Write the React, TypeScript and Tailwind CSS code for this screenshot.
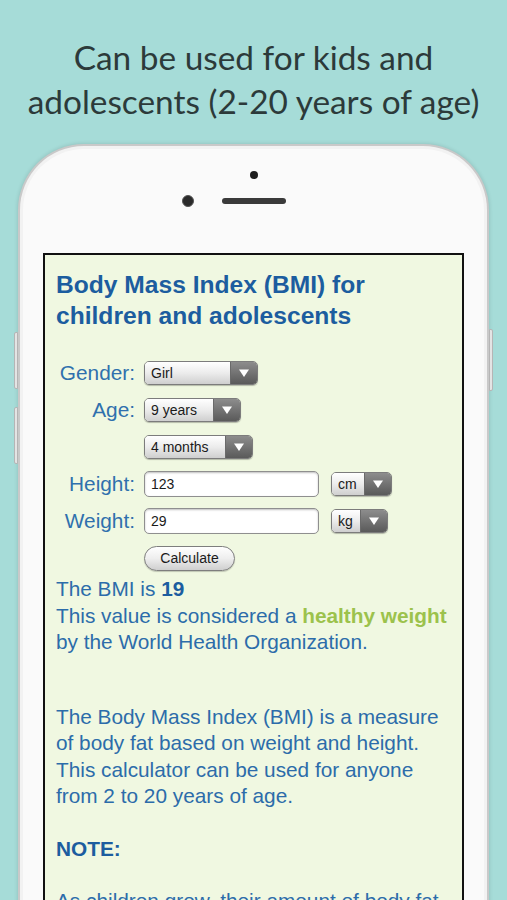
import React from 'react';

const Arrow = () => (
  <svg width="12" height="10" viewBox="0 0 12 10">
    <path d="M1 1.5 L11 1.5 L6 9 Z" fill="#ffffff" />
  </svg>
);

const Select = ({ label, width }: { label: string; width: string }) => (
  <div className={`flex h-[24px] ${width} rounded-[5px] border border-[#7c7c7c] overflow-hidden shadow-[0_1px_1px_rgba(0,0,0,0.25)]`}>
    <div className="flex-1 flex items-center pl-[6px] text-[14px] text-[#1a1a1a] bg-gradient-to-b from-[#ffffff] via-[#ececec] to-[#cfcfcf]">
      {label}
    </div>
    <div className="w-[27px] flex items-center justify-center bg-gradient-to-b from-[#8d8d8d] to-[#5a5a5a] border-l border-[#6a6a6a]">
      <Arrow />
    </div>
  </div>
);

const Field = ({ value }: { value: string }) => (
  <div className="h-[26px] w-[175px] rounded-[5px] border border-[#8f8f8f] bg-white shadow-[inset_0_1px_2px_rgba(0,0,0,0.25)] flex items-center pl-[6px] text-[14px] text-[#1a1a1a]">
    {value}
  </div>
);

const Label = ({ children }: { children: React.ReactNode }) => (
  <div className="w-[79px] shrink-0 text-right text-[20.8px] text-[#2f70ad]">{children}</div>
);

export default function App() {
  return (
    <div
      className="w-[507px] h-[900px] bg-[#a6dcd8] overflow-hidden flex flex-col"
      style={{ fontFamily: '"Liberation Sans", Arial, sans-serif' }}
    >
      <h1
        className="pt-[35px] text-center text-[33.4px] leading-[44px] text-[#2c3a3a]"
        style={{ fontFamily: 'Lato, "Open Sans", sans-serif' }}
      >
        Can be used for kids and
        <br />
        adolescents (2-20 years of age)
      </h1>

      <div className="relative mt-[21px] mx-[18px] flex-1 rounded-t-[66px] bg-[#c9c9c9] p-[2px] shadow-[0_0_4px_rgba(0,0,0,0.15)]">
        <div className="absolute -left-[4px] top-[188px] w-[4px] h-[57px] rounded-l-[2px] bg-[#e4e4e4] border border-[#b5b5b5]" />
        <div className="absolute -left-[4px] top-[263px] w-[4px] h-[57px] rounded-l-[2px] bg-[#e4e4e4] border border-[#b5b5b5]" />
        <div className="absolute -right-[4px] top-[185px] w-[4px] h-[62px] rounded-r-[2px] bg-[#e4e4e4] border border-[#b5b5b5]" />

        <div className="h-full rounded-t-[64px] bg-[#f2f2f2] p-[3px]">
          <div className="h-full rounded-t-[61px] bg-[#fafafa] flex flex-col">
            <div className="h-[104px] flex flex-col items-center">
              <div className="mt-[22px] w-[8px] h-[8px] rounded-full bg-[#1e1e1e]" />
              <div className="relative mt-[19px] w-[64px] h-[6px] rounded-full bg-[#3a3a3a]">
                <div className="absolute -left-[40px] -top-[3px] w-[12px] h-[12px] rounded-full bg-[#2a2a2a] border border-[#555]" />
              </div>
            </div>

            <div className="mx-[20px] flex-1 border-2 border-[#111] border-b-0 bg-[#f0f8e1] px-[11px] overflow-hidden">
              <h2 className="pt-[14px] text-[24.6px] leading-[31px] font-bold text-[#1c5d9f] whitespace-nowrap">
                Body Mass Index (BMI) for
                <br />
                children and adolescents
              </h2>

              <div className="mt-[29px] flex flex-col gap-[11px]">
                <div className="h-[26px] flex items-center gap-[9px]">
                  <Label>Gender:</Label>
                  <Select label="Girl" width="w-[114px]" />
                </div>
                <div className="h-[26px] flex items-center gap-[9px]">
                  <Label>Age:</Label>
                  <Select label="9 years" width="w-[97px]" />
                </div>
                <div className="h-[26px] flex items-center gap-[9px]">
                  <div className="w-[79px]" />
                  <Select label="4 months" width="w-[109px]" />
                </div>
                <div className="h-[26px] flex items-center gap-[9px]">
                  <Label>Height:</Label>
                  <Field value="123" />
                  <div className="ml-[3px]">
                    <Select label="cm" width="w-[61px]" />
                  </div>
                </div>
                <div className="h-[26px] flex items-center gap-[9px]">
                  <Label>Weight:</Label>
                  <Field value="29" />
                  <div className="ml-[3px]">
                    <Select label="kg" width="w-[57px]" />
                  </div>
                </div>
                <div className="h-[26px] flex items-center gap-[9px]">
                  <div className="w-[79px]" />
                  <button className="w-[91px] h-[25px] rounded-full border border-[#7e7e7e] bg-gradient-to-b from-[#ffffff] via-[#eeeeee] to-[#cfcfcf] text-[14px] text-[#1a1a1a] shadow-[0_1px_1px_rgba(0,0,0,0.2)]">
                    Calculate
                  </button>
                </div>
              </div>

              <div className="mt-[5px] text-[20.8px] leading-[26.5px] text-[#2c6caa] whitespace-nowrap">
                <p>
                  The BMI is <b className="text-[#1c5d9f]">19</b>
                </p>
                <p>
                  This value is considered a <b className="text-[#9cc24c]">healthy weight</b>
                </p>
                <p>by the World Health Organization.</p>

                <p className="mt-[48px]">
                  The Body Mass Index (BMI) is a measure
                  <br />
                  of body fat based on weight and height.
                  <br />
                  This calculator can be used for anyone
                  <br />
                  from 2 to 20 years of age.
                </p>

                <p className="mt-[26px] font-bold text-[#1c5d9f]">NOTE:</p>

                <p className="mt-[26px]">As children grow, their amount of body fat</p>
              </div>
            </div>
          </div>
        </div>
      </div>
    </div>
  );
}
